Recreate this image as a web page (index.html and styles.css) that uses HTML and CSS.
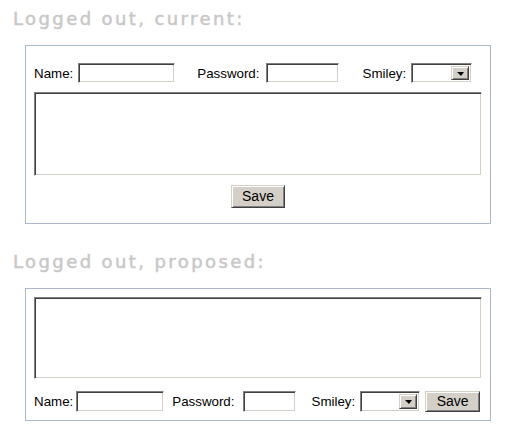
FILE: index.html
```html
<!DOCTYPE html>
<html lang="en">
<head>
<meta charset="UTF-8">
<title>Comment form mockups</title>
<link rel="stylesheet" href="styles.css">
</head>
<body>

<!-- current layout -->
<h2 class="heading">Logged out, current:</h2>
<div class="panel panel-current">
    <div class="row row-top">
        <label class="lbl">Name:</label>
        <span class="field name-field"></span>
        <label class="lbl lbl-gap">Password:</label>
        <span class="field pass-field"></span>
        <label class="lbl lbl-gap lbl-smiley">Smiley:</label>
        <span class="select">
            <span class="select-value"></span>
            <span class="select-arrow"><span class="tri"></span></span>
        </span>
    </div>
    <div class="textbox textbox-current"></div>
    <div class="save-row">
        <span class="btn">Save</span>
    </div>
</div>

<!-- proposed layout -->
<h2 class="heading heading-second">Logged out, proposed:</h2>
<div class="panel panel-proposed">
    <div class="textbox textbox-proposed"></div>
    <div class="row row-bottom">
        <label class="lbl">Name:</label>
        <span class="field name-field-2"></span>
        <label class="lbl lbl-pass-2">Password:</label>
        <span class="field pass-field-2"></span>
        <label class="lbl lbl-smiley-2">Smiley:</label>
        <span class="select select-2">
            <span class="select-value"></span>
            <span class="select-arrow"><span class="tri"></span></span>
        </span>
        <span class="btn btn-2">Save</span>
    </div>
</div>

</body>
</html>
```

FILE: styles.css
```css
body {
    margin: 0;
    padding: 0 13px;
    background: #ffffff;
    font-family: "Liberation Sans", Arial, sans-serif;
    font-size: 13.33px;
    color: #000000;
}

/* Section titles */
.heading {
    margin: 0;
    padding-top: 9px;
    height: 45px;
    box-sizing: border-box;
    font-family: "DejaVu Sans", sans-serif;
    font-size: 18px;
    font-weight: normal;
    letter-spacing: 2.4px;
    line-height: 20px;
    color: #c8c8c8;
    -webkit-text-stroke: 0.5px #c8c8c8;
}

.heading-second {
    margin-top: 19px;
}

/* Bordered boxes */
.panel {
    width: 466px;
    box-sizing: border-box;
    margin-left: 12px;
    border: 1px solid #a9b8cc;
    padding: 0 8px;
}

.panel-current {
    padding-top: 17px;
    padding-bottom: 15px;
}

.panel-proposed {
    padding-top: 8px;
    padding-bottom: 8px;
}

/* Form rows */
.row {
    display: flex;
    align-items: center;
}

.row-top {
    height: 20px;
}

.row-bottom {
    height: 21px;
    margin-top: 12px;
}

.lbl {
    white-space: nowrap;
}

.lbl-gap {
    margin-left: 22px;
}

.lbl-smiley {
    margin-left: 24px;
}

/* Classic sunken fields */
.field,
.textbox,
.select {
    box-sizing: border-box;
    background: #ffffff;
    border: 1px solid;
    border-color: #808080 #ffffff #ffffff #808080;
    box-shadow: inset 1px 1px #404040, inset -1px -1px #d4d0c8;
}

.field {
    display: block;
    height: 100%;
    margin-left: 5px;
}

.name-field { width: 97px; }
.pass-field { width: 73px; margin-left: 6px; }

.name-field-2 { width: 88px; margin-left: 3px; }
.lbl-pass-2 { margin-left: 8px; }
.pass-field-2 { width: 53px; margin-left: 8px; }
.lbl-smiley-2 { margin-left: 16px; }

.textbox {
    width: 448px;
}

.textbox-current {
    height: 84px;
    margin-top: 9px;
}

.textbox-proposed {
    height: 82px;
}

/* Dropdown */
.select {
    display: flex;
    width: 61px;
    height: 100%;
    margin-left: 5px;
    padding: 2px;
}

.select-2 {
    width: 60px;
    margin-left: 5px;
}

.select-value {
    flex: 1;
}

.select-arrow {
    width: 18px;
    display: flex;
    align-items: center;
    justify-content: center;
    box-sizing: border-box;
    background: #d4d0c8;
    border: 1px solid;
    border-color: #d4d0c8 #404040 #404040 #d4d0c8;
    box-shadow: inset 1px 1px #ffffff, inset -1px -1px #808080;
}

.tri {
    width: 0;
    height: 0;
    margin-top: 1px;
    border-left: 4px solid transparent;
    border-right: 3px solid transparent;
    border-top: 4px solid #000000;
}

/* Buttons */
.save-row {
    display: flex;
    justify-content: center;
    margin-top: 9px;
}

.btn {
    display: flex;
    align-items: center;
    justify-content: center;
    box-sizing: border-box;
    width: 54px;
    height: 23px;
    padding-bottom: 1px;
    background: #d4d0c8;
    border: 1px solid;
    border-color: #d4d0c8 #404040 #404040 #d4d0c8;
    box-shadow: inset 1px 1px #ffffff, inset -1px -1px #808080;
    font-size: 14px;
}

.btn-2 {
    width: 55px;
    height: 21px;
    margin-left: 5px;
}
```
